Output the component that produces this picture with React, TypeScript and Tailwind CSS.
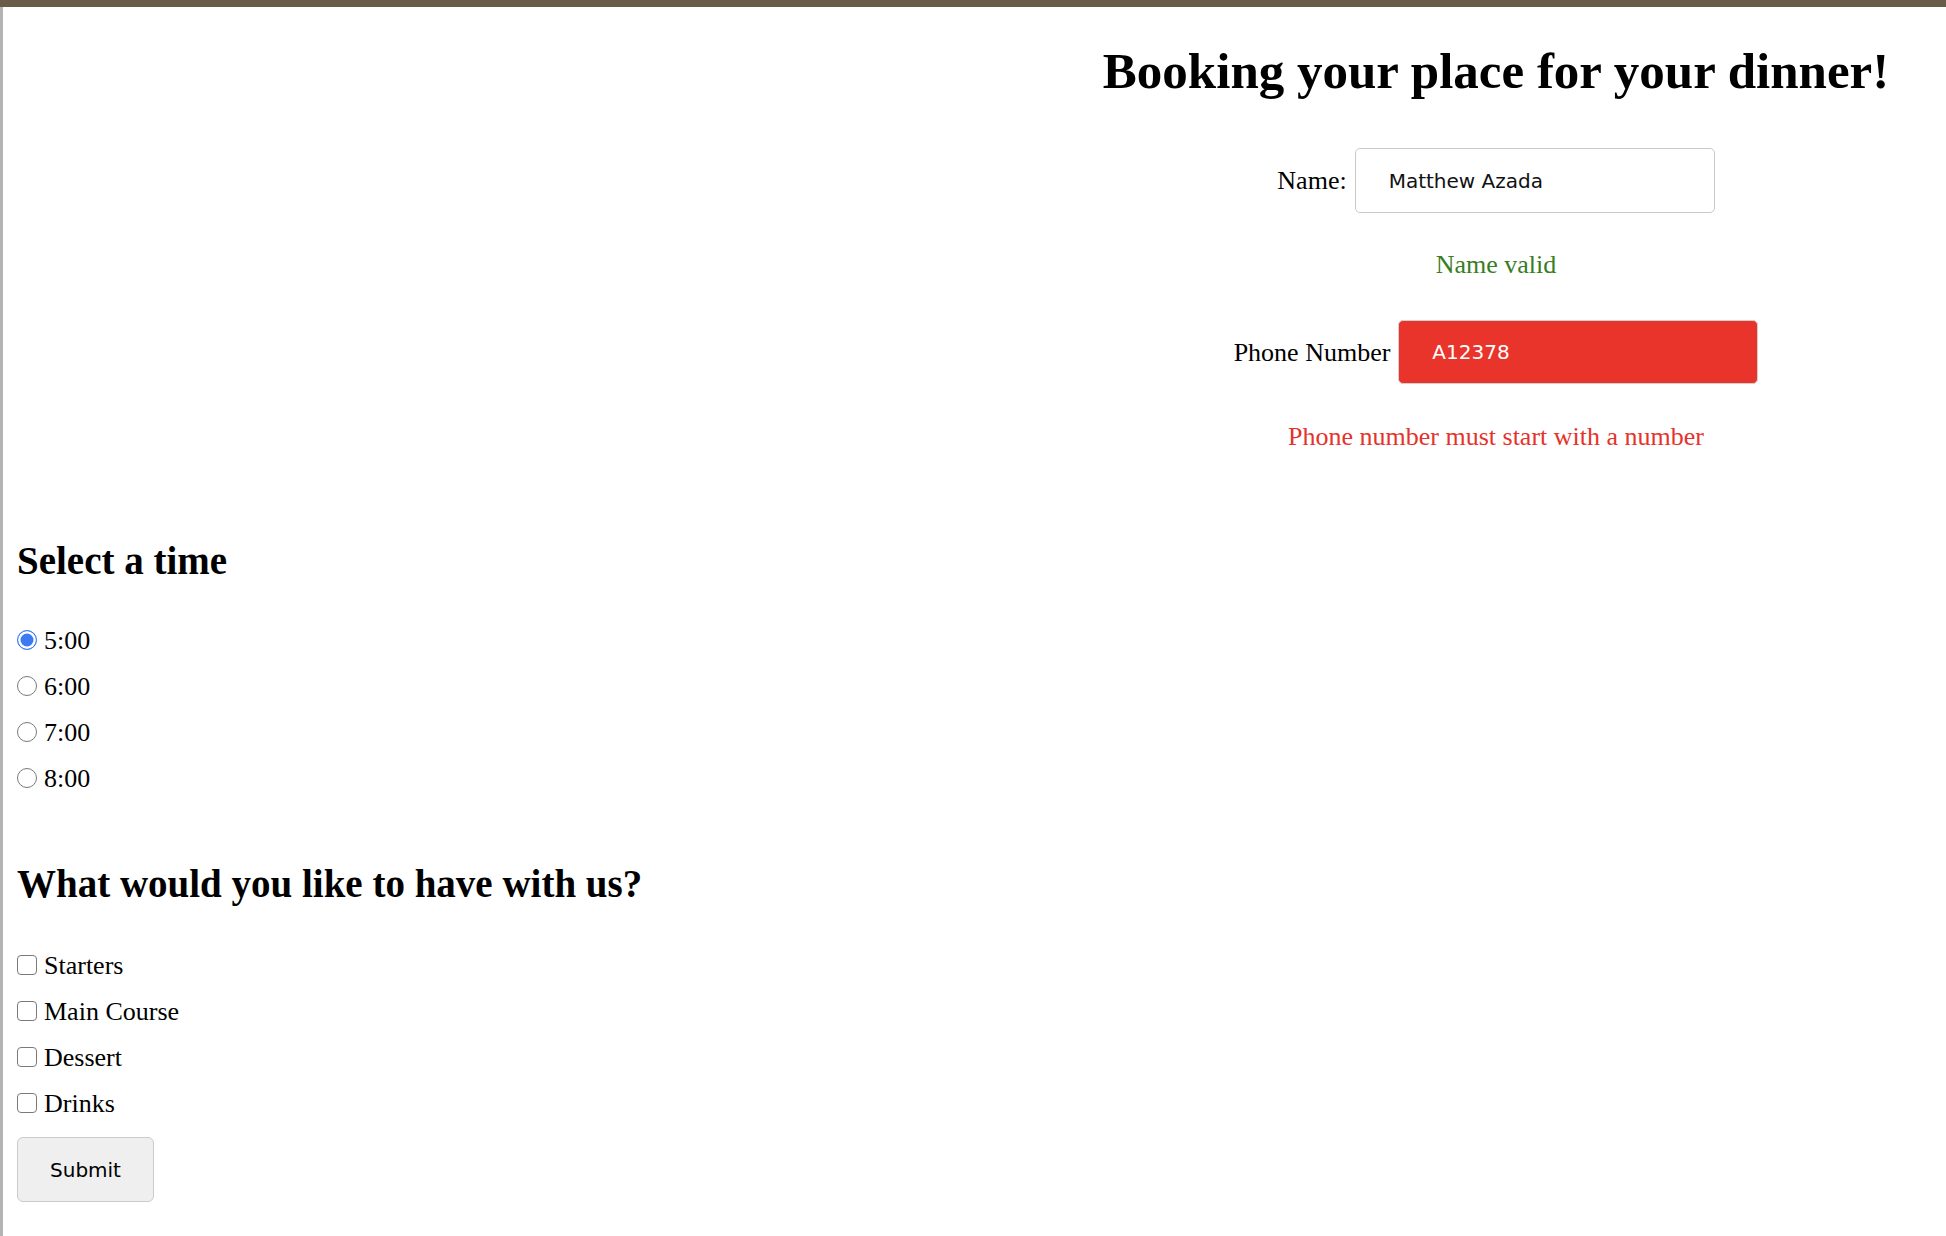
import { useState } from "react";

const times = ["5:00", "6:00", "7:00", "8:00"];
const courses = ["Starters", "Main Course", "Dessert", "Drinks"];

export default function App() {
  const [name, setName] = useState("Matthew Azada");
  const [phone, setPhone] = useState("A12378");
  const [time, setTime] = useState("5:00");
  const [picked, setPicked] = useState<string[]>([]);

  const phoneOk = /^[0-9]/.test(phone);

  const toggle = (c: string) =>
    setPicked((p) => (p.includes(c) ? p.filter((x) => x !== c) : [...p, c]));

  return (
    <div className="min-h-screen flex flex-col bg-white text-black font-['Liberation_Serif',serif]">
      {/* window chrome */}
      <div className="h-[7px] bg-[#6b5c4a]" />

      <div className="flex-1 flex">
        <div className="w-[3px] bg-[#b4b4b4]" />

        <main className="flex-1 px-[14px]">
          {/* Booking form */}
          <section className="ml-auto w-[872px] pt-[34px] flex flex-col items-center text-center">
            <h1 className="text-[51px] leading-[60px] font-bold">Booking your place for your dinner!</h1>

            <div className="mt-[47px] flex items-center gap-[8px] text-[26px]">
              <label htmlFor="name">Name:</label>
              <input
                id="name"
                value={name}
                onChange={(e) => setName(e.target.value)}
                className="w-[360px] h-[65px] pl-[33px] rounded-[5px] border border-[#c9c9c9] bg-white text-[20px] text-[#111] outline-none font-['DejaVu_Sans',sans-serif]"
              />
            </div>
            <p className="mt-[37px] text-[26px] leading-[30px] text-[#377d22]">Name valid</p>

            <div className="mt-[40px] flex items-center gap-[8px] text-[26px]">
              <label htmlFor="phone">Phone Number</label>
              <input
                id="phone"
                value={phone}
                onChange={(e) => setPhone(e.target.value)}
                className={
                  phoneOk
                    ? "w-[360px] h-[64px] pl-[33px] rounded-[5px] border border-[#c9c9c9] bg-white text-[20px] text-[#111] outline-none font-['DejaVu_Sans',sans-serif]"
                    : "w-[360px] h-[64px] pl-[33px] rounded-[5px] border border-[#cfcfcf] bg-[#e8342a] text-[20px] text-white outline-none font-['DejaVu_Sans',sans-serif]"
                }
              />
            </div>
            <p className="mt-[38px] text-[26px] leading-[30px] text-[#e5322a]">
              {phoneOk ? "Phone number valid" : "Phone number must start with a number"}
            </p>
          </section>

          {/* Time */}
          <h2 className="mt-[86px] text-[39px] leading-[46px] font-bold">Select a time</h2>
          <div className="mt-[34px] flex flex-col">
            {times.map((t) => (
              <label key={t} className="h-[46px] flex items-center gap-[7px] text-[26px]">
                <input
                  type="radio"
                  name="time"
                  checked={time === t}
                  onChange={() => setTime(t)}
                  className="appearance-none m-0 -mt-[2px] w-[20px] h-[20px] rounded-full border-[1.5px] border-[#7a7a7a] bg-white checked:border-[#3a7bf3] checked:bg-[#3a7bf3] checked:shadow-[inset_0_0_0_2.5px_white]"
                />
                <span className="leading-[30px]">{t}</span>
              </label>
            ))}
          </div>

          {/* Courses */}
          <h2 className="mt-[59px] text-[39px] leading-[46px] font-bold">What would you like to have with us?</h2>
          <div className="mt-[36px] flex flex-col">
            {courses.map((c) => (
              <label key={c} className="h-[46px] flex items-center gap-[7px] text-[26px]">
                <input
                  type="checkbox"
                  checked={picked.includes(c)}
                  onChange={() => toggle(c)}
                  className="appearance-none m-0 -mt-[2px] w-[20px] h-[20px] rounded-[4px] border-[1.5px] border-[#7a7a7a] bg-white checked:bg-[#3a7bf3] checked:border-[#3a7bf3]"
                />
                <span className="leading-[30px]">{c}</span>
              </label>
            ))}
          </div>

          <button className="mt-[10px] w-[137px] h-[65px] rounded-[6px] border border-[#cbcbcb] bg-[#efefef] text-[20px] text-black font-['DejaVu_Sans',sans-serif]">
            Submit
          </button>
        </main>
      </div>
    </div>
  );
}
